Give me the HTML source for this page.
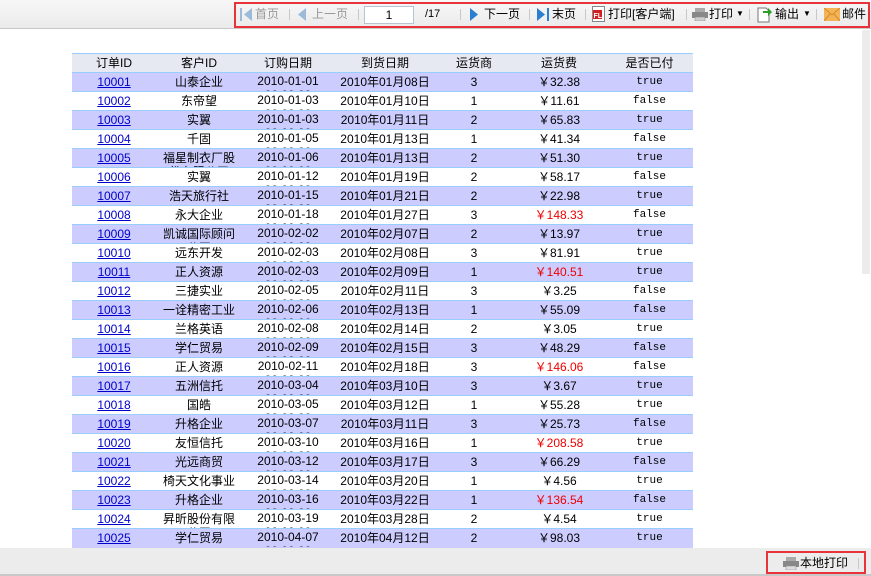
<!DOCTYPE html>
<html><head><meta charset="utf-8"><style>
*{margin:0;padding:0;box-sizing:border-box}
body{width:871px;height:576px;overflow:hidden;background:#fff;font-family:"Liberation Sans","Noto Sans CJK SC","WenQuanYi Zen Hei",sans-serif;font-size:12px;color:#000;position:relative}
#tb{position:absolute;left:0;top:0;width:871px;height:29px;background:linear-gradient(#f7f7f7,#ebebeb);border-bottom:1px solid #c8c8c8}
#tbb{position:absolute;left:234px;top:2px;width:636px;height:26px;border:2px solid #e8333a}
.t{position:absolute;top:7px;font-size:12px;line-height:14px;white-space:nowrap}
.g{color:#999}
.sep{position:absolute;top:9px;width:1px;height:11px;background:#c8c8c8}
#inp{position:absolute;left:364px;top:6px;width:50px;height:18px;background:#fff;border:1px solid #b8c4d4;text-align:center;font-size:12px;line-height:16px}
#main{position:absolute;left:0;top:30px;width:862px;height:518px;background:#fff}
#sb{position:absolute;left:862px;top:30px;width:8px;height:244px;background:#ececec}
table{position:absolute;left:72px;top:53px;border-collapse:collapse;table-layout:fixed;width:621px}
td{height:19px;padding:0;text-align:center;border-top:1px solid #99ccff;overflow:hidden;vertical-align:top}
td div{height:18px;overflow:hidden;line-height:14px;padding-top:2px}
td.c div{padding-left:6px;padding-right:6px}
tr.h td{background:#e6e9f2;font-size:12px}
tr.o td{background:#ccccff}
a{color:#00c;text-decoration:underline}
.m{font-family:"Liberation Mono","WenQuanYi Zen Hei",monospace;font-size:11px}
.r{color:#e00}
.d{line-height:14px!important;padding-top:1px!important}
#ft{position:absolute;left:0;top:548px;width:871px;height:28px;background:#ececec;border-bottom:2px solid #c8c8c8}
#ftb{position:absolute;left:766px;top:551px;width:100px;height:23px;border:2px solid #e8333a}
</style></head><body>
<div id="tb"></div>
<div id="tbb"></div>
<svg style="position:absolute;left:240px;top:8px" width="13" height="13"><rect x="0" y="0" width="2" height="13" fill="#9bbbd8"/><path d="M12 0 L4 6.5 L12 13Z" fill="#9bbbd8"/></svg>
<span class="t g" style="left:255px">首页</span>
<div class="sep" style="left:289px"></div>
<svg style="position:absolute;left:298px;top:8px" width="9" height="13"><path d="M8 0 L0 6.5 L8 13Z" fill="#9bbbd8"/></svg>
<span class="t g" style="left:312px">上一页</span>
<div class="sep" style="left:358px"></div>
<div id="inp">1</div>
<span class="t" style="left:425px;font-size:11px">/17</span>
<div class="sep" style="left:460px"></div>
<svg style="position:absolute;left:470px;top:8px" width="9" height="13"><path d="M0 0 L8 6.5 L0 13Z" fill="#2a7fd0"/></svg>
<span class="t" style="left:484px">下一页</span>
<div class="sep" style="left:529px"></div>
<svg style="position:absolute;left:537px;top:8px" width="13" height="13"><path d="M0 0 L8 6.5 L0 13Z" fill="#2a7fd0"/><rect x="10" y="0" width="2" height="13" fill="#2a7fd0"/></svg>
<span class="t" style="left:552px">末页</span>
<div class="sep" style="left:585px"></div>
<svg style="position:absolute;left:592px;top:6px" width="13" height="16"><rect x="0.5" y="0.5" width="12" height="15" fill="#fff" stroke="#888"/><rect x="1" y="4" width="9" height="9" fill="#d42020"/><text x="1.5" y="12" font-size="7" fill="#fff" font-family="Liberation Sans" font-weight="bold">FL</text></svg>
<span class="t" style="left:608px">打印[客户端]</span>
<div class="sep" style="left:686px"></div>
<svg style="position:absolute;left:692px;top:8px" width="16" height="13"><rect x="3" y="0" width="10" height="4" fill="#aaa"/><rect x="0" y="4" width="16" height="6" fill="#888"/><rect x="3" y="9" width="10" height="4" fill="#ccc" stroke="#888" stroke-width="0.5"/></svg>
<span class="t" style="left:709px">打印</span>
<span class="t" style="left:736px;font-size:8px">▼</span>
<div class="sep" style="left:749px"></div>
<svg style="position:absolute;left:757px;top:6px" width="16" height="17"><path d="M1 2 H9 L12 5 V16 H1Z" fill="#fff" stroke="#777"/><path d="M6 5 H11 V2 L15 6 L11 10 V7 H6Z" fill="#2aa02a"/></svg>
<span class="t" style="left:775px">输出</span>
<span class="t" style="left:803px;font-size:8px">▼</span>
<div class="sep" style="left:816px"></div>
<svg style="position:absolute;left:824px;top:8px" width="16" height="13"><rect x="0" y="0" width="16" height="13" fill="#f2b457"/><path d="M0 0 L8 7 L16 0 M0 13 L6 6 M16 13 L10 6" stroke="#d88a1e" fill="none"/></svg>
<span class="t" style="left:842px">邮件</span>

<div id="main"></div>
<div id="sb"></div>
<table>
<colgroup><col style="width:84px"><col style="width:86px"><col style="width:92px"><col style="width:102px"><col style="width:76px"><col style="width:94px"><col style="width:87px"></colgroup>
<tr class="h"><td><div>订单ID</div></td><td><div>客户ID</div></td><td><div>订购日期</div></td><td><div>到货日期</div></td><td><div>运货商</div></td><td><div>运货费</div></td><td><div>是否已付</div></td></tr>
<tr class="o"><td><div><a>10001</a></div></td><td class="c"><div>山泰企业</div></td><td><div class="d">2010-01-01<br>00:00:00</div></td><td><div>2010年01月08日</div></td><td><div>3</div></td><td><div>￥32.38</div></td><td><div class="m">true</div></td></tr>
<tr><td><div><a>10002</a></div></td><td class="c"><div>东帝望</div></td><td><div class="d">2010-01-03<br>00:00:00</div></td><td><div>2010年01月10日</div></td><td><div>1</div></td><td><div>￥11.61</div></td><td><div class="m">false</div></td></tr>
<tr class="o"><td><div><a>10003</a></div></td><td class="c"><div>实翼</div></td><td><div class="d">2010-01-03<br>00:00:00</div></td><td><div>2010年01月11日</div></td><td><div>2</div></td><td><div>￥65.83</div></td><td><div class="m">true</div></td></tr>
<tr><td><div><a>10004</a></div></td><td class="c"><div>千固</div></td><td><div class="d">2010-01-05<br>00:00:00</div></td><td><div>2010年01月13日</div></td><td><div>1</div></td><td><div>￥41.34</div></td><td><div class="m">false</div></td></tr>
<tr class="o"><td><div><a>10005</a></div></td><td class="c"><div>福星制衣厂股份有限公司</div></td><td><div class="d">2010-01-06<br>00:00:00</div></td><td><div>2010年01月13日</div></td><td><div>2</div></td><td><div>￥51.30</div></td><td><div class="m">true</div></td></tr>
<tr><td><div><a>10006</a></div></td><td class="c"><div>实翼</div></td><td><div class="d">2010-01-12<br>00:00:00</div></td><td><div>2010年01月19日</div></td><td><div>2</div></td><td><div>￥58.17</div></td><td><div class="m">false</div></td></tr>
<tr class="o"><td><div><a>10007</a></div></td><td class="c"><div>浩天旅行社</div></td><td><div class="d">2010-01-15<br>00:00:00</div></td><td><div>2010年01月21日</div></td><td><div>2</div></td><td><div>￥22.98</div></td><td><div class="m">true</div></td></tr>
<tr><td><div><a>10008</a></div></td><td class="c"><div>永大企业</div></td><td><div class="d">2010-01-18<br>00:00:00</div></td><td><div>2010年01月27日</div></td><td><div>3</div></td><td><div class="r">￥148.33</div></td><td><div class="m">false</div></td></tr>
<tr class="o"><td><div><a>10009</a></div></td><td class="c"><div>凯诚国际顾问公司</div></td><td><div class="d">2010-02-02<br>00:00:00</div></td><td><div>2010年02月07日</div></td><td><div>2</div></td><td><div>￥13.97</div></td><td><div class="m">true</div></td></tr>
<tr><td><div><a>10010</a></div></td><td class="c"><div>远东开发</div></td><td><div class="d">2010-02-03<br>00:00:00</div></td><td><div>2010年02月08日</div></td><td><div>3</div></td><td><div>￥81.91</div></td><td><div class="m">true</div></td></tr>
<tr class="o"><td><div><a>10011</a></div></td><td class="c"><div>正人资源</div></td><td><div class="d">2010-02-03<br>00:00:00</div></td><td><div>2010年02月09日</div></td><td><div>1</div></td><td><div class="r">￥140.51</div></td><td><div class="m">true</div></td></tr>
<tr><td><div><a>10012</a></div></td><td class="c"><div>三捷实业</div></td><td><div class="d">2010-02-05<br>00:00:00</div></td><td><div>2010年02月11日</div></td><td><div>3</div></td><td><div>￥3.25</div></td><td><div class="m">false</div></td></tr>
<tr class="o"><td><div><a>10013</a></div></td><td class="c"><div>一诠精密工业</div></td><td><div class="d">2010-02-06<br>00:00:00</div></td><td><div>2010年02月13日</div></td><td><div>1</div></td><td><div>￥55.09</div></td><td><div class="m">false</div></td></tr>
<tr><td><div><a>10014</a></div></td><td class="c"><div>兰格英语</div></td><td><div class="d">2010-02-08<br>00:00:00</div></td><td><div>2010年02月14日</div></td><td><div>2</div></td><td><div>￥3.05</div></td><td><div class="m">true</div></td></tr>
<tr class="o"><td><div><a>10015</a></div></td><td class="c"><div>学仁贸易</div></td><td><div class="d">2010-02-09<br>00:00:00</div></td><td><div>2010年02月15日</div></td><td><div>3</div></td><td><div>￥48.29</div></td><td><div class="m">false</div></td></tr>
<tr><td><div><a>10016</a></div></td><td class="c"><div>正人资源</div></td><td><div class="d">2010-02-11<br>00:00:00</div></td><td><div>2010年02月18日</div></td><td><div>3</div></td><td><div class="r">￥146.06</div></td><td><div class="m">false</div></td></tr>
<tr class="o"><td><div><a>10017</a></div></td><td class="c"><div>五洲信托</div></td><td><div class="d">2010-03-04<br>00:00:00</div></td><td><div>2010年03月10日</div></td><td><div>3</div></td><td><div>￥3.67</div></td><td><div class="m">true</div></td></tr>
<tr><td><div><a>10018</a></div></td><td class="c"><div>国皓</div></td><td><div class="d">2010-03-05<br>00:00:00</div></td><td><div>2010年03月12日</div></td><td><div>1</div></td><td><div>￥55.28</div></td><td><div class="m">true</div></td></tr>
<tr class="o"><td><div><a>10019</a></div></td><td class="c"><div>升格企业</div></td><td><div class="d">2010-03-07<br>00:00:00</div></td><td><div>2010年03月11日</div></td><td><div>3</div></td><td><div>￥25.73</div></td><td><div class="m">false</div></td></tr>
<tr><td><div><a>10020</a></div></td><td class="c"><div>友恒信托</div></td><td><div class="d">2010-03-10<br>00:00:00</div></td><td><div>2010年03月16日</div></td><td><div>1</div></td><td><div class="r">￥208.58</div></td><td><div class="m">true</div></td></tr>
<tr class="o"><td><div><a>10021</a></div></td><td class="c"><div>光远商贸</div></td><td><div class="d">2010-03-12<br>00:00:00</div></td><td><div>2010年03月17日</div></td><td><div>3</div></td><td><div>￥66.29</div></td><td><div class="m">false</div></td></tr>
<tr><td><div><a>10022</a></div></td><td class="c"><div>椅天文化事业</div></td><td><div class="d">2010-03-14<br>00:00:00</div></td><td><div>2010年03月20日</div></td><td><div>1</div></td><td><div>￥4.56</div></td><td><div class="m">true</div></td></tr>
<tr class="o"><td><div><a>10023</a></div></td><td class="c"><div>升格企业</div></td><td><div class="d">2010-03-16<br>00:00:00</div></td><td><div>2010年03月22日</div></td><td><div>1</div></td><td><div class="r">￥136.54</div></td><td><div class="m">false</div></td></tr>
<tr><td><div><a>10024</a></div></td><td class="c"><div>昇昕股份有限公司</div></td><td><div class="d">2010-03-19<br>00:00:00</div></td><td><div>2010年03月28日</div></td><td><div>2</div></td><td><div>￥4.54</div></td><td><div class="m">true</div></td></tr>
<tr class="o"><td><div><a>10025</a></div></td><td class="c"><div>学仁贸易</div></td><td><div class="d">2010-04-07<br>00:00:00</div></td><td><div>2010年04月12日</div></td><td><div>2</div></td><td><div>￥98.03</div></td><td><div class="m">true</div></td></tr>
</table>
<div id="ft"></div>
<div id="ftb"></div>
<svg style="position:absolute;left:783px;top:557px" width="16" height="13"><rect x="3" y="0" width="10" height="4" fill="#aaa"/><rect x="0" y="4" width="16" height="6" fill="#888"/><rect x="3" y="9" width="10" height="4" fill="#ddd" stroke="#888" stroke-width="0.5"/></svg>
<span class="t" style="left:800px;top:556px">本地打印</span>
<div class="sep" style="left:858px;top:558px"></div>
</body></html>
